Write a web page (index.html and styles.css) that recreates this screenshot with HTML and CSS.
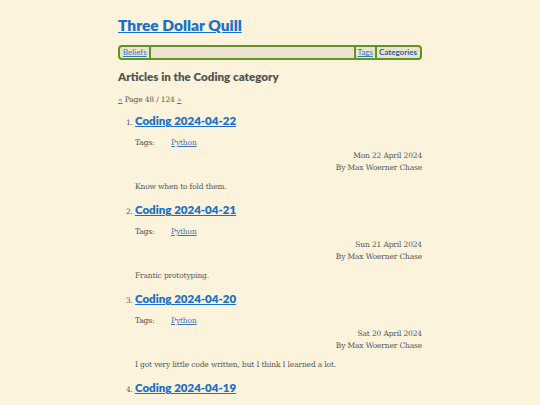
FILE: index.html
```html
<!DOCTYPE html>
<html lang="en">
<head>
<meta charset="utf-8">
<title>Three Dollar Quill</title>
<link rel="stylesheet" href="styles.css">
</head>
<body>
<div class="page">
  <header class="site-header">
    <h1 class="site-title"><a href="#">Three Dollar Quill</a></h1>
    <nav class="menu">
      <a class="menu-item first" href="#">Beliefs</a>
      <span class="menu-spacer"></span>
      <a class="menu-item bar-left" href="#">Tags</a>
      <a class="menu-item current" href="#">Categories</a>
    </nav>
  </header>
  <main>
    <h2 class="category-title">Articles in the Coding category</h2>
    <p class="pager"><a href="#">«</a> Page 48 / 124 <a href="#">»</a></p>
    <ol class="articles">
      <li class="article">
        <h3 class="article-title"><a href="#">Coding 2024-04-22</a></h3>
        <div class="tags"><span class="tags-label">Tags:</span><a href="#">Python</a></div>
        <div class="meta"><div>Mon 22 April 2024</div><div>By Max Woerner Chase</div></div>
        <p class="summary">Know when to fold them.</p>
      </li>
      <li class="article">
        <h3 class="article-title"><a href="#">Coding 2024-04-21</a></h3>
        <div class="tags"><span class="tags-label">Tags:</span><a href="#">Python</a></div>
        <div class="meta"><div>Sun 21 April 2024</div><div>By Max Woerner Chase</div></div>
        <p class="summary">Frantic prototyping.</p>
      </li>
      <li class="article">
        <h3 class="article-title"><a href="#">Coding 2024-04-20</a></h3>
        <div class="tags"><span class="tags-label">Tags:</span><a href="#">Python</a></div>
        <div class="meta"><div>Sat 20 April 2024</div><div>By Max Woerner Chase</div></div>
        <p class="summary">I got very little code written, but I think I learned a lot.</p>
      </li>
      <li class="article">
        <h3 class="article-title"><a href="#">Coding 2024-04-19</a></h3>
      </li>
    </ol>
  </main>
</div>
</body>
</html>
```

FILE: styles.css
```css
html, body {
  margin: 0;
  padding: 0;
  background: #fbf3dc;
}
body {
  font-family: "DejaVu Serif", "Liberation Serif", serif;
  font-size: 7.5px;
  letter-spacing: -0.15px;
  color: #444;
  overflow: hidden;
}
.page {
  width: 304px;
  margin: 0 auto;
  padding-top: 14px;
}
a {
  color: #2a6fb8;
}
.site-title {
  margin: 0;
  font-family: Lato, "Open Sans", sans-serif;
  font-size: 15.5px;
  line-height: 23px;
  font-weight: 800;
  letter-spacing: 0;
}
.site-title a {
  color: #1a70c8;
}
.menu {
  margin-top: 8px;
  height: 11px;
  display: flex;
  align-items: stretch;
  border: 2px solid #5e961e;
  border-radius: 4px;
  background: #ebe3cf;
  padding: 0 1px;
  font-family: Lato, "Open Sans", sans-serif;
  font-size: 8px;
  line-height: 11px;
  letter-spacing: 0;
}
.menu-item {
  padding: 0 2px;
  color: #3d78b8;
}
.menu-item.first {
  border-right: 2px solid #5e961e;
}
.menu-spacer {
  flex: 1;
}
.menu-item.bar-left {
  border-left: 2px solid #5e961e;
  border-right: 2px solid #5e961e;
}
.menu-item.current {
  font-weight: 700;
  color: #1f63a8;
  text-decoration: none;
}
.category-title {
  margin: 9px 0 0;
  font-family: Lato, "Open Sans", sans-serif;
  font-size: 11.6px;
  line-height: 16px;
  font-weight: 800;
  color: #555;
  letter-spacing: 0;
}
.pager {
  margin: 9px 0 0;
  line-height: 12px;
  color: #555;
}
.pager a {
  color: #3d78b8;
}
.articles {
  margin: 7px 0 0;
  padding-left: 17px;
}
.article {
  line-height: 12px;
  margin-bottom: 9px;
}
.article::marker {
  color: #555;
}
.article-title {
  margin: 0;
  font-family: Lato, "Open Sans", sans-serif;
  font-size: 11.5px;
  line-height: 16px;
  font-weight: 800;
  letter-spacing: 0;
}
.article-title a {
  color: #1a70c8;
}
.tags {
  margin-top: 8px;
  display: grid;
  grid-template-columns: 36px auto;
  justify-content: start;
}
.tags a {
  color: #3d78b8;
}
.meta {
  margin-top: 1px;
  text-align: right;
  color: #555;
}
.summary {
  margin: 7px 0 0;
  color: #555;
}
```
